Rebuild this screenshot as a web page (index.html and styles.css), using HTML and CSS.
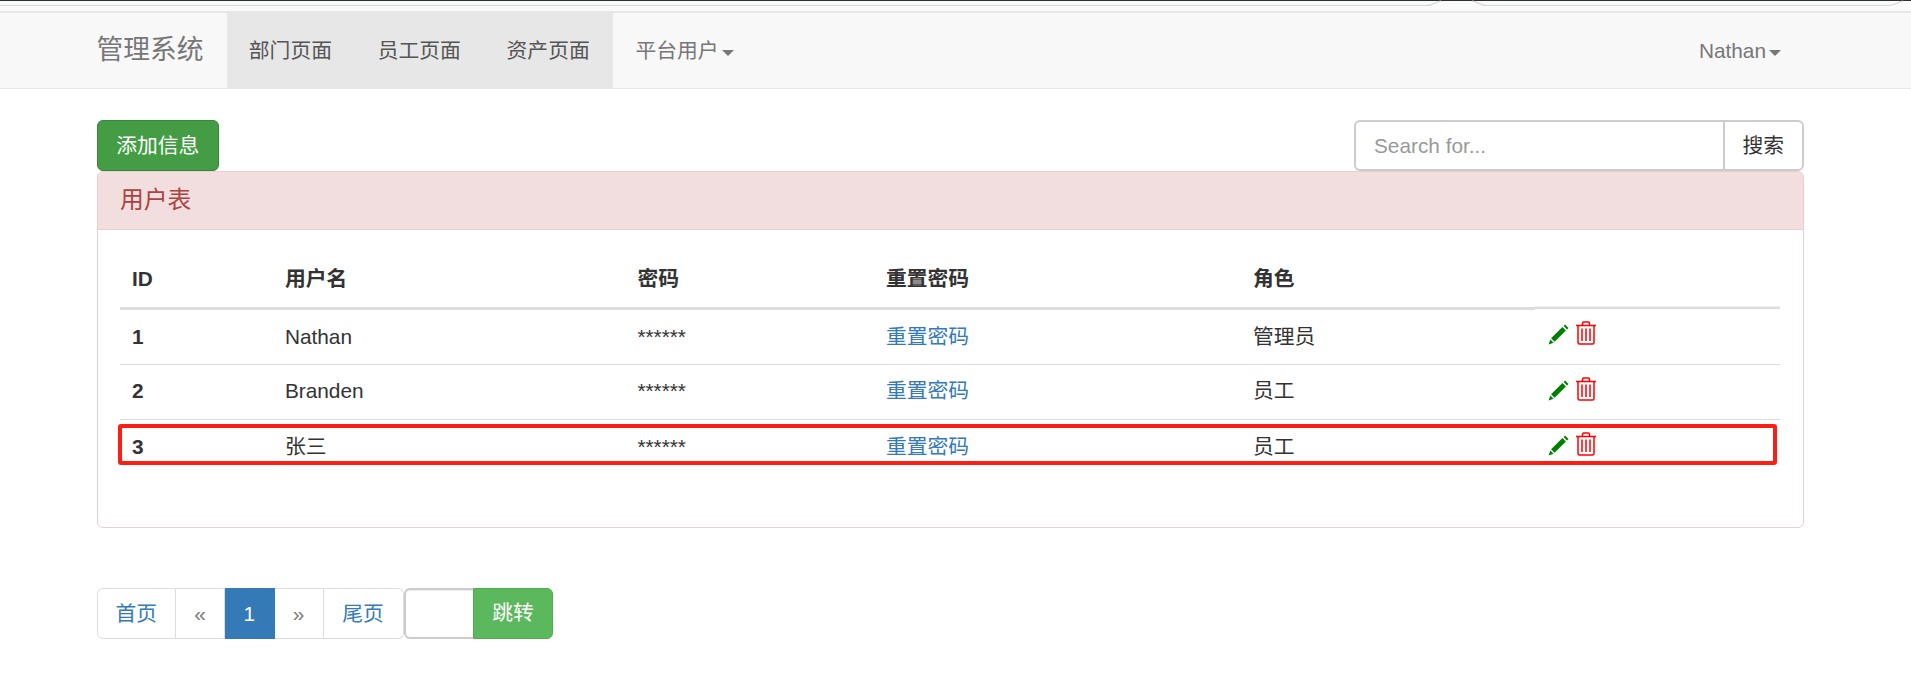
FILE: index.html
```html
<!DOCTYPE html>
<html lang="zh-CN">
<head>
<meta charset="utf-8">
<title>管理系统</title>
<link rel="stylesheet" href="styles.css">
</head>
<body>
<svg class="chrome" width="1911" height="13" viewBox="0 0 1911 13">
  <rect width="1911" height="1" fill="#2b3033"/>
  <path d="M0 5.5H1426C1434 5.5 1436 1 1441 1M1472 1C1477 1 1479 5.5 1487 5.5H1888C1896 5.5 1899 1 1903 1" fill="none" stroke="#d6d6d6" stroke-width="1.2"/>
  <rect y="11" width="1911" height="2" fill="#e7e7e7"/>
</svg>
<nav class="navbar">
  <div class="nav-inner">
    <a class="brand">管理系统</a>
    <a class="nav-link active">部门页面</a>
    <a class="nav-link active">员工页面</a>
    <a class="nav-link active">资产页面</a>
    <a class="nav-link">平台用户<span class="caret"></span></a>
    <a class="nav-link user">Nathan<span class="caret"></span></a>
  </div>
</nav>
<main class="content">
  <div class="toolbar">
    <button class="btn-add">添加信息</button>
    <div class="search">
      <input class="search-input" placeholder="Search for...">
      <button class="search-btn">搜索</button>
    </div>
  </div>
  <section class="panel">
    <h3 class="panel-heading">用户表</h3>
    <div class="panel-body">
      <table class="table">
        <colgroup>
          <col class="c1"><col class="c2"><col class="c3"><col class="c4"><col class="c5"><col class="c6">
        </colgroup>
        <thead>
          <tr><th>ID</th><th>用户名</th><th>密码</th><th>重置密码</th><th>角色</th><th class="no-rule"></th></tr>
        </thead>
        <tbody>
          <tr>
            <th>1</th><td>Nathan</td><td>******</td><td><a class="link">重置密码</a></td><td>管理员</td>
            <td class="ops">
              <svg class="ico-pencil" viewBox="0 0 22 22"><path d="M17 1.5l3.5 3.5-1.4 1.4-3.5-3.5zM14.4 4l3.5 3.5L6.6 18.8l-3.5-3.5zM2.3 16.4l3.3 3.3L.6 21.4z"/></svg><svg class="ico-trash" viewBox="0 0 20 24"><path d="M0 4.5h20M6.5 4.5V2.2Q6.5 1 7.7 1h4.6q1.2 0 1.2 1.2v2.3M2 4.5V21.5q0 1.5 1.5 1.5h13q1.5 0 1.5-1.5V4.5M6 7.5V20M10 7.5V20M14 7.5V20"/></svg>
            </td>
          </tr>
          <tr>
            <th>2</th><td>Branden</td><td>******</td><td><a class="link">重置密码</a></td><td>员工</td>
            <td class="ops">
              <svg class="ico-pencil" viewBox="0 0 22 22"><path d="M17 1.5l3.5 3.5-1.4 1.4-3.5-3.5zM14.4 4l3.5 3.5L6.6 18.8l-3.5-3.5zM2.3 16.4l3.3 3.3L.6 21.4z"/></svg><svg class="ico-trash" viewBox="0 0 20 24"><path d="M0 4.5h20M6.5 4.5V2.2Q6.5 1 7.7 1h4.6q1.2 0 1.2 1.2v2.3M2 4.5V21.5q0 1.5 1.5 1.5h13q1.5 0 1.5-1.5V4.5M6 7.5V20M10 7.5V20M14 7.5V20"/></svg>
            </td>
          </tr>
          <tr>
            <th>3</th><td>张三</td><td>******</td><td><a class="link">重置密码</a></td><td>员工</td>
            <td class="ops">
              <svg class="ico-pencil" viewBox="0 0 22 22"><path d="M17 1.5l3.5 3.5-1.4 1.4-3.5-3.5zM14.4 4l3.5 3.5L6.6 18.8l-3.5-3.5zM2.3 16.4l3.3 3.3L.6 21.4z"/></svg><svg class="ico-trash" viewBox="0 0 20 24"><path d="M0 4.5h20M6.5 4.5V2.2Q6.5 1 7.7 1h4.6q1.2 0 1.2 1.2v2.3M2 4.5V21.5q0 1.5 1.5 1.5h13q1.5 0 1.5-1.5V4.5M6 7.5V20M10 7.5V20M14 7.5V20"/></svg>
            </td>
          </tr>
        </tbody>
      </table>
      <div class="highlight"></div>
    </div>
  </section>
  <div class="pager">
    <a class="page first link">首页</a>
    <a class="page arrow">«</a>
    <a class="page current">1</a>
    <a class="page arrow">»</a>
    <a class="page last link">尾页</a>
    <input class="jump-input">
    <button class="jump-btn">跳转</button>
  </div>
</main>
</body>
</html>
```
FILE: styles.css
```css
* { box-sizing: border-box; }
html, body { margin: 0; padding: 0; }
body {
  width: 1911px;
  height: 689px;
  overflow: hidden;
  background: #fff;
  color: #333;
  font: 20.8px/29.7px "Liberation Sans", "Noto Sans CJK SC", sans-serif;
}
.chrome { display: block; background: #fafafa; }

.navbar {
  height: 76px;
  background: #f8f8f8;
  border-bottom: 1.5px solid #e7e7e7;
}
.nav-inner {
  display: flex;
  height: 75px;
  padding-left: 96.5px;
  padding-right: 130px;
}
.brand {
  font-size: 26.75px;
  color: #777;
  width: 130px;
  line-height: 75px;
}
.nav-link {
  padding: 0 22.3px;
  line-height: 75px;
  color: #777;
  white-space: nowrap;
}
.nav-link.active { background: #e7e7e7; color: #555; width: 128.9px; }
.user { margin-left: auto; padding: 0; }
.caret {
  display: inline-block;
  margin-left: 3px;
  vertical-align: middle;
  border-top: 6px solid #777;
  border-left: 6px solid transparent;
  border-right: 6px solid transparent;
}

.content { padding: 31px 107.5px 0 96.5px; }
.toolbar {
  display: flex;
  justify-content: space-between;
  height: 51px;
}
.btn-add {
  width: 122.5px;
  height: 51px;
  padding: 0;
  background: #449d44;
  border: 1px solid #398439;
  border-radius: 6px;
  color: #fff;
  font: inherit;
}
.search { display: flex; width: 449.5px; height: 51px; }
.search-input {
  flex: 1;
  min-width: 0;
  padding: 0 18px;
  border: 2px solid #ccc;
  border-right: 0;
  border-radius: 6px 0 0 6px;
  color: #555;
  font: inherit;
  outline: 0;
}
.search-input::placeholder { color: #999; }
.search-btn {
  width: 80.5px;
  padding: 0;
  background: #fff;
  border: 2px solid #ccc;
  border-radius: 0 6px 6px 0;
  color: #333;
  font: inherit;
}

.panel {
  height: 357px;
  border: 1.5px solid #ebccd1;
  border-radius: 6px;
  position: relative;
}
.panel-heading {
  margin: 0;
  height: 58px;
  padding: 0 22.5px;
  background: #f2dede;
  border-bottom: 1.5px solid #ebccd1;
  border-radius: 4px 4px 0 0;
  color: #a94442;
  font-size: 23.8px;
  font-weight: 400;
  line-height: 56px;
}
.panel-body { padding: 22px 22.5px 0; }
.table { width: 1660px; border-collapse: collapse; table-layout: fixed; }
.c1 { width: 153px; }
.c2 { width: 352.5px; }
.c3 { width: 248.5px; }
.c4 { width: 367px; }
.c5 { width: 294px; }
.c6 { width: 245px; }
.table th, .table td {
  height: 55.5px;
  padding: 11.5px 11.9px;
  text-align: left;
  font-weight: 400;
  border-top: 1.5px solid #ddd;
  vertical-align: top;
}
.table th { font-weight: 700; }
.table thead th {
  height: 56px;
  border-top: 0;
  border-bottom: 3px solid #ddd;
  vertical-align: bottom;
  padding-bottom: 14px;
}
.table thead th.no-rule { border-bottom: 0; box-shadow: inset 0 -1.5px 0 #ddd; }
.link { color: #337ab7; }
.ops { white-space: nowrap; padding-top: 12px !important; padding-left: 12.5px !important; line-height: 0; }
.ico-pencil { width: 22px; height: 22px; fill: #008000; margin: 2px 6px 0 0; vertical-align: top; }
.ico-trash {
  width: 20px;
  height: 24px;
  fill: none;
  stroke: #f00;
  stroke-width: 1.5;
  vertical-align: top;
}
.highlight {
  position: absolute;
  left: 20.5px;
  top: 252px;
  width: 1659px;
  height: 41px;
  border: 4.5px solid #fb1f13;
  border-radius: 3px;
}

.pager { display: flex; margin-top: 59.5px; height: 51px; }
.page {
  height: 51px;
  line-height: 49px;
  text-align: center;
  border: 1.5px solid #ddd;
  border-left: 0;
  background: #fff;
}
.first { width: 79.5px; border-left: 1.5px solid #ddd; border-radius: 6px 0 0 6px; }
.arrow { width: 49px; color: #777; }
.current { width: 49.5px; background: #337ab7; border-color: #337ab7; color: #fff; }
.last { width: 80px; border-radius: 0 6px 6px 0; }
.jump-input {
  width: 69px;
  height: 51px;
  margin-left: 0.5px;
  border: 2px solid #ccc;
  border-right: 0;
  border-radius: 6px 0 0 6px;
  box-shadow: inset 0 1px 1px rgba(0,0,0,.075);
  outline: 0;
}
.jump-btn {
  width: 80px;
  height: 51px;
  padding: 0;
  background: #5cb85c;
  border: 1.5px solid #4cae4c;
  border-radius: 0 6px 6px 0;
  color: #fff;
  font: inherit;
}
```
